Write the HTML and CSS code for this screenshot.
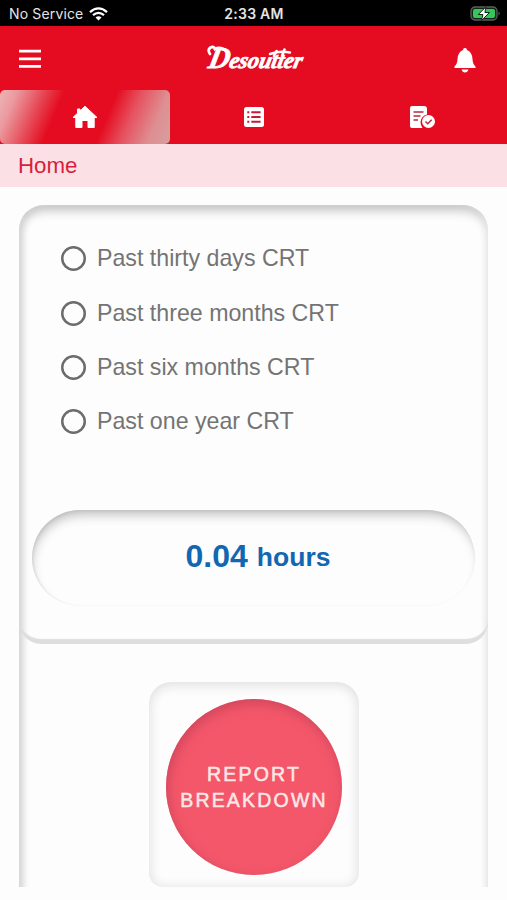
FILE: index.html
```
<!DOCTYPE html>
<html lang="en">
<head>
<meta charset="utf-8">
<title>Home</title>
<link rel="stylesheet" href="styles.css">
</head>
<body>
<div class="status">
  <div class="carrier"><span>No Service</span>
    <svg width="19" height="14" viewBox="0 0 19 14"><g fill="none" stroke="#fff" stroke-width="2.3"><path d="M1 5.1Q9.500-2.300 18 5.100"/><path d="M4 8.200Q9.500 3.500 15 8.200"/></g><path d="M6.500 10.500Q9.500 8.200 12.500 10.500L9.500 13.500Z" fill="#fff"/></svg>
  </div>
  <div class="clock">2:33 AM</div>
  <svg class="battery" width="32" height="16" viewBox="0 0 32 16"><rect x="1" y="1" width="26" height="13" rx="4" fill="#16251b" stroke="#56625a" stroke-width="1.300"/><rect x="3" y="3" width="22" height="9" rx="2" fill="#35c75a"/><path d="M28.500 5.500q2.500 2 0 4z" fill="#56625a"/><path d="M16 .8L8.300 8.500h4.600L11.500 14.600L19.500 6.500h-4.600z" fill="#fff" stroke="#14251a" stroke-width="1"/></svg>
</div>
<header class="topbar">
  <svg width="22" height="20" viewBox="0 0 22 20"><path d="M0 2.200h22M0 9.800h22M0 17.400h22" stroke="#fff" stroke-width="2.800"/></svg>
  <svg class="logo" width="116" height="40" viewBox="-6 -3 116 40"><g fill="#fff" stroke="#fff" stroke-width=".8" transform="translate(6 0) skewX(-12)"><text class="brand" x="1" y="27" textLength="94" lengthAdjust="spacingAndGlyphs"><tspan font-size="30">D</tspan>esoutter</text></g><g fill="none" stroke="#fff" stroke-linecap="round"><path d="M4 13Q1 9 4.500 6.500Q8 5 9 8Q14 5 21 10" stroke-width="2.800"/><path d="M64 13Q74 9.500 84 11.500" stroke-width="2.400"/><path d="M68 15L70.500 10M76 15L78.500 8.500" stroke-width="2.600"/></g></svg>
  <svg width="22" height="26" viewBox="0 0 22 26"><path fill="#fff" d="M11 0a2 2 0 0 1 2 2Q18 4 18.500 11Q18.500 15.500 21.500 18.500V20H.5v-1.500Q3.500 15.500 3.500 11Q4 4 9 2a2 2 0 0 1 2-2zM7.500 21.500h7q-1 3-3.500 3t-3.500-3z"/></svg>
</header>
<nav class="tabs">
  <a class="tab active"><svg width="26" height="24" viewBox="0 0 26 24"><path fill="#fff" stroke="#fff" stroke-width="1" stroke-linejoin="round" d="M13 1.200L25 12.500h-2.800V22.500H16V15.500H10V22.500H3.800V12.500H1L5.500 8.200V4H8V5.900z"/></svg></a>
  <a class="tab"><svg width="20" height="20" viewBox="0 0 20 20"><rect width="20" height="20" rx="2.500" fill="#fff"/><path d="M3.300 5.200h2M3.300 10h2M3.300 14.800h2M7.300 5.200h9.300M7.300 10h9.300M7.300 14.800h9.300" stroke="#c51b38" stroke-width="2"/></svg></a>
  <a class="tab"><svg width="27" height="24" viewBox="0 0 27 24"><path fill="#fff" d="M3 1h12a3 3 0 0 1 3 3v5.500Q12 11 11.500 17q0 3.500 2 6H3a2 2 0 0 1-2-2V3a2 2 0 0 1 2-2z"/><path d="M4.500 7h10M4.500 11h7M4.500 15h4.500" stroke="#b82b3d" stroke-width="1.500"/><circle cx="19.500" cy="16.500" r="6.500" fill="#fff"/><path d="M16.500 16.500l2.200 2.200 4-4" fill="none" stroke="#b82b3d" stroke-width="1.500"/></svg></a>
</nav>
<div class="crumb">Home</div>
<main class="scroll">
  <div class="panel">
    <section class="filters">
      <div class="options">
        <label class="option"><span class="radio"></span>Past thirty days CRT</label>
        <label class="option"><span class="radio"></span>Past three months CRT</label>
        <label class="option"><span class="radio"></span>Past six months CRT</label>
        <label class="option"><span class="radio"></span>Past one year CRT</label>
      </div>
      <div class="result"><span class="value">0.04</span><span class="unit">hours</span></div>
    </section>
    <section class="report">
      <button class="report-button">REPORT<br>BREAKDOWN</button>
    </section>
  </div>
</main>
</body>
</html>
```
FILE: styles.css
```
* { box-sizing: border-box; }
body {
  margin: 0;
  height: 900px;
  overflow: hidden;
  background: #fdfdfd;
  font-family: "Liberation Sans", Arial, sans-serif;
}
svg { display: block; }
.status {
  display: grid;
  grid-template-columns: 1fr auto 1fr;
  align-items: center;
  height: 26px;
  padding: 1px 5px 0 9px;
  background: #000;
  color: #e4e4e4;
  font: 14px/24px Inter, sans-serif;
}
.carrier { display: flex; gap: 6px; align-items: center; letter-spacing: .15px; }
.clock { margin-right: 3px; font-weight: 600; font-size: 14px; letter-spacing: .25px; }
.battery { justify-self: end; }
.topbar {
  display: flex;
  justify-content: space-between;
  align-items: center;
  height: 64px;
  padding: 0 31px 0 19px;
  background: #e50b20;
}
.logo { margin: 0 0 1px 20px; }
.topbar svg:last-child { margin-top: 6px; }
.topbar svg:first-child { margin-top: 1px; }
.brand { font: italic bold 23px "Liberation Serif", serif; }
.tabs {
  display: grid;
  grid-template-columns: 170px 168px 1fr;
  height: 54px;
  background: #e50b20;
}
.tab { display: flex; align-items: center; justify-content: center; padding-bottom: 1px; }
.tab.active {
  border-radius: 5px;
  background: linear-gradient(113deg, #edb4b5 0%, #eb9a9f 9%, #e64350 24%, #e50b20 34%, #e50b20 61%, #e65260 74%, #de8e91 88%, #d6a0a0 100%);
}
.crumb {
  height: 43px;
  padding-left: 18px;
  background: #fbe1e5;
  color: #d91e3d;
  font-size: 22.300px;
  line-height: 44px;
}
.scroll {
  height: 682px;
  margin: 18px 0 0 19px;
  overflow: hidden;
}
.panel {
  width: 469px;
  height: 720px;
  border-radius: 25px;
  background: #fdfdfd;
  box-shadow: inset 6px 0 7px -2px #d4d4d4, inset -5px 0 6px -3px #e8e8e8, inset 0 9px 11px -4px #bcbcbc;
}
.filters {
  height: 439px;
  padding: 26.500px 13px 0;
  border-radius: 25px 25px 22px 22px;
  box-shadow: inset 0 -6px 1px -1px #dedede;
}
.options { height: 278.500px; padding-left: 29px; }
.option {
  display: flex;
  align-items: center;
  gap: 11px;
  height: 54.400px;
  color: #747474;
  font-size: 23.200px;
}
.radio { width: 25px; height: 25px; border-radius: 50%; box-shadow: inset 0 0 0 2.500px #6c6c6c; }
.result {
  display: flex;
  align-items: baseline;
  justify-content: center;
  gap: 9px;
  height: 96px;
  padding: 28px 0 0 9px;
  border-radius: 48px;
  background: #fdfdfd;
  color: #1267b3;
  font-weight: bold;
  box-shadow: inset 2px 8px 12px -4px #b8b8b8, inset 1px 1px 3px #dedede;
}
.value { font-size: 32px; line-height: 36px; }
.unit { font-size: 26.500px; transform: translateY(-1px); }
.report {
  width: 210px;
  height: 205px;
  margin: 38px 0 0 130px;
  padding: 17px;
  border-radius: 22px 22px 14px 14px;
  background: #fdfdfd;
  box-shadow: inset 0 2px 12px 1px #dedede;
}
.report-button {
  display: block;
  width: 176px;
  height: 176px;
  padding: 0;
  border: 0;
  border-radius: 50%;
  background: #f4576a;
  color: #fbe7e6;
  font: 19.500px/26px "Liberation Sans", Arial, sans-serif;
  letter-spacing: 2.200px;
  -webkit-text-stroke: .5px #fbe7e6;
  box-shadow: inset 2px 4px 12px #cf465c;
}
```
